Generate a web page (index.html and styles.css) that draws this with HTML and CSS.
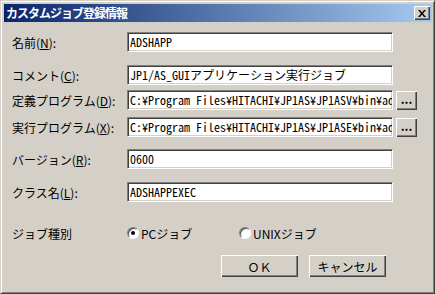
FILE: index.html
```html
<!DOCTYPE html>
<html lang="ja">
<head>
    <meta charset="UTF-8">
    <title>カスタムジョブ登録情報</title>
    <link rel="stylesheet" href="styles.css">
</head>
<body>
    <div class="window">
        <div class="titlebar">
            <span class="title">カスタムジョブ登録情報</span>
            <div class="close-btn">
                <svg width="8" height="7" viewBox="0 0 8 7">
                    <path d="M0 0h2l2 2.5 2-2.5h2L5 3.5 8 7H6L4 4.5 2 7H0l3-3.5z" fill="#000"/>
                </svg>
            </div>
        </div>
        <div class="content">
            <div class="row row-name">
                <div class="label">名前(<u>N</u>):</div>
                <div class="field">ADSHAPP</div>
            </div>
            <div class="row row-comment">
                <div class="label">コメント(<u>C</u>):</div>
                <div class="field">JP1/AS_GUIアプリケーション実行ジョブ</div>
            </div>
            <div class="row row-def">
                <div class="label">定義プログラム(<u>D</u>):</div>
                <div class="field">C:¥Program Files¥HITACHI¥JP1AS¥JP1ASV¥bin¥ad</div>
                <div class="browse">...</div>
            </div>
            <div class="row row-exec">
                <div class="label">実行プログラム(<u>X</u>):</div>
                <div class="field">C:¥Program Files¥HITACHI¥JP1AS¥JP1ASE¥bin¥ad</div>
                <div class="browse">...</div>
            </div>
            <div class="row row-version">
                <div class="label">バージョン(<u>R</u>):</div>
                <div class="field">0600</div>
            </div>
            <div class="row row-class">
                <div class="label">クラス名(<u>L</u>):</div>
                <div class="field">ADSHAPPEXEC</div>
            </div>
            <div class="row row-type">
                <div class="label">ジョブ種別</div>
                <div class="radio-option radio-pc"><span class="radio checked"></span>PCジョブ</div>
                <div class="radio-option"><span class="radio"></span>UNIXジョブ</div>
            </div>
            <div class="actions">
                <div class="btn">ＯＫ</div>
                <div class="btn">キャンセル</div>
            </div>
        </div>
    </div>
</body>
</html>
```

FILE: styles.css
```css
body {
    margin: 0;
    background-color: #d4d0c8;
    font-family: "Noto Sans CJK JP", "Liberation Sans", sans-serif;
    font-size: 12px;
    color: #000;
}
.window {
    width: 435px;
    height: 294px;
    box-sizing: border-box;
    background-color: #d4d0c8;
    border-style: solid;
    border-width: 1px;
    border-color: #d4d0c8 #404040 #404040 #d4d0c8;
    padding: 2px;
    box-shadow: inset 1px 1px 0 #fff, inset -1px -1px 0 #808080;
}
.titlebar {
    margin: 1px 0 0 1px;
    height: 18px;
    display: flex;
    align-items: center;
    justify-content: space-between;
    padding: 0 2px 0 2px;
    background: linear-gradient(to right, #0a246a, #a6caf0);
}
.title {
    color: #fff;
    font-weight: bold;
    letter-spacing: -1px;
    line-height: 18px;
}
.close-btn {
    width: 16px;
    height: 14px;
    box-sizing: border-box;
    background-color: #d4d0c8;
    display: flex;
    align-items: center;
    justify-content: center;
    box-shadow: inset 1px 1px 0 #fff, inset -1px -1px 0 #404040, inset -2px -2px 0 #808080;
}
.content {
    padding: 10px 0 0 9px;
}
.row {
    display: flex;
    align-items: center;
    height: 20px;
}
.row-comment { margin-top: 13px; }
.row-def { margin-top: 5px; }
.row-exec { margin-top: 7px; }
.row-version { margin-top: 12px; }
.row-class { margin-top: 13px; }
.row-type { margin-top: 21px; }
.label {
    width: 115px;
    flex-shrink: 0;
    white-space: nowrap;
}
.field {
    width: 266px;
    height: 20px;
    box-sizing: border-box;
    background-color: #fff;
    border-style: solid;
    border-width: 1px;
    border-color: #808080 #fff #fff #808080;
    box-shadow: inset 1px 1px 0 #404040, inset -1px -1px 0 #d4d0c8;
    padding: 0 2px 0 2px;
    font-family: "Noto Sans Mono CJK JP", "Liberation Mono", monospace;
    font-size: 12px;
    line-height: 18px;
    white-space: nowrap;
    overflow: hidden;
}
.browse {
    width: 21px;
    height: 19px;
    margin-left: 3px;
    box-sizing: border-box;
    background-color: #d4d0c8;
    box-shadow: inset 1px 1px 0 #fff, inset -1px -1px 0 #404040, inset -2px -2px 0 #808080;
    text-align: center;
    font-weight: bold;
    line-height: 16px;
}
.radio-option {
    display: flex;
    align-items: center;
    white-space: nowrap;
}
.radio-pc {
    width: 112px;
}
.radio {
    width: 12px;
    height: 12px;
    box-sizing: border-box;
    border-radius: 50%;
    background-color: #fff;
    border: 1px solid;
    border-color: #808080 #fff #fff #808080;
    box-shadow: inset 1px 1px 0 #404040;
    margin-right: 2px;
    display: flex;
    align-items: center;
    justify-content: center;
}
.radio.checked::after {
    content: "";
    width: 4px;
    height: 4px;
    border-radius: 50%;
    background-color: #000;
}
.actions {
    display: flex;
    gap: 11px;
    margin: 12px 0 0 209px;
}
.btn {
    width: 77px;
    height: 22px;
    box-sizing: border-box;
    background-color: #d4d0c8;
    box-shadow: inset 1px 1px 0 #fff, inset -1px -1px 0 #404040, inset -2px -2px 0 #808080;
    display: flex;
    align-items: center;
    justify-content: center;
}
```
